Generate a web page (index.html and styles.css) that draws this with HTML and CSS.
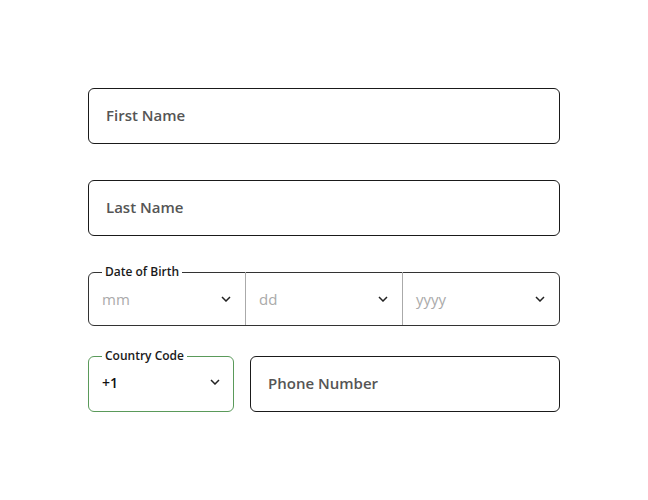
FILE: index.html
```html
<!DOCTYPE html>
<html>
<head>
<meta charset="utf-8">
<link rel="stylesheet" href="styles.css">
</head>
<body>
<form class="form">
  <div class="field"><span class="ph">First Name</span></div>
  <div class="field"><span class="ph">Last Name</span></div>
  <fieldset class="group dob">
    <legend class="legend">Date of Birth</legend>
    <div class="sel"><span class="muted">mm</span><svg class="chev" viewBox="0 0 10 6"><path d="M1 1l4 4 4-4"/></svg></div>
    <div class="sel"><span class="muted">dd</span><svg class="chev" viewBox="0 0 10 6"><path d="M1 1l4 4 4-4"/></svg></div>
    <div class="sel"><span class="muted">yyyy</span><svg class="chev" viewBox="0 0 10 6"><path d="M1 1l4 4 4-4"/></svg></div>
  </fieldset>
  <div class="phone-row">
    <fieldset class="group cc">
      <legend class="legend">Country Code</legend>
      <div class="sel"><span class="val">+1</span><svg class="chev" viewBox="0 0 10 6"><path d="M1 1l4 4 4-4"/></svg></div>
    </fieldset>
    <div class="field phone"><span class="ph">Phone Number</span></div>
  </div>
</form>
</body>
</html>
```
FILE: styles.css
```css
* { box-sizing: border-box; }
body {
  margin: 0;
  background: #fff;
  font-family: "Open Sans", "Noto Sans", sans-serif;
}
.form {
  width: 472px;
  margin: 88px 0 0 88px;
  display: flex;
  flex-direction: column;
  gap: 36px;
}
.field {
  height: 56px;
  border: 1px solid #1a1a1a;
  border-radius: 6px;
  display: flex;
  align-items: center;
  padding: 0 17px;
}
.ph {
  font-size: 15px;
  font-weight: 600;
  color: #555;
  margin-top: -2px;
}
.group {
  margin: 0;
  padding: 0;
  border: 1px solid #333;
  border-radius: 6px;
  display: flex;
  min-width: 0;
}
.dob { height: 62px; margin-top: -8px; }
.legend {
  font-size: 12px;
  font-weight: 600;
  color: #1a1a1a;
  padding: 0 3px;
  margin-left: 13px;
  line-height: 16px;
}
.sel {
  flex: 1;
  display: flex;
  align-items: center;
  justify-content: space-between;
  padding: 0 14px 0 13px;
}
.dob .sel {
  margin-top: -8px;
  height: 53px;
  padding-top: 1px;
}
.dob .sel + .sel { border-left: 1px solid #aaa; }
.muted {
  font-size: 15px;
  color: #aaa;
}
.val {
  font-size: 14px;
  font-weight: 600;
  color: #111;
}
.chev {
  width: 10px;
  height: 6px;
  fill: none;
  stroke: #222;
  stroke-width: 1.5;
}
.phone-row {
  display: flex;
  gap: 16px;
  align-items: flex-end;
  margin-top: -14px;
}
.cc {
  width: 146px;
  height: 64px;
  border-color: #5a9a5a;
}
.cc .sel { padding: 0 13px; height: 48px; margin-top: -6px; }
.phone { flex: 1; height: 56px; }
```
